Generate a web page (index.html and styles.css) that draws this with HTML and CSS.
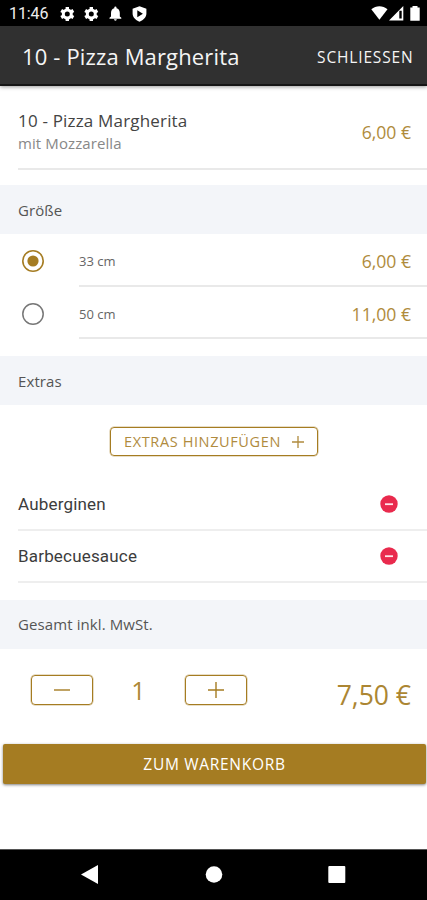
FILE: index.html
```html
<!DOCTYPE html>
<html lang="de">
<head>
<meta charset="utf-8">
<title>10 - Pizza Margherita</title>
<link rel="stylesheet" href="styles.css">
</head>
<body>
<div class="status">
  <span class="time">11:46</span>
  <svg class="status-left" width="94" height="26" viewBox="56 0 94 26" fill="#fff">
    <defs><g id="gear"><circle r="4" fill="none" stroke="#fff" stroke-width="3"/><path d="M0-7V-4M0 7V4M-6.1-3.5L-3.5-2M6.1 3.5L3.5 2M-6.1 3.5L-3.5 2M6.1-3.5L3.5-2" stroke="#fff" stroke-width="3.4"/></g></defs>
    <use href="#gear" x="67.3" y="14"/>
    <use href="#gear" x="91.3" y="14"/>
    <path d="M109.500 18.700v-1l1.500-1.300v-3.400c0-2.600 1.300-4.200 3.300-4.700V7.600a1.100 1.100 0 0 1 2.200 0v.7c2 .5 3.300 2.100 3.300 4.700v3.400l1.500 1.300v1zM114 19.300h2.800a1.400 1.400 0 0 1-2.800 0z"/>
    <path fill-rule="evenodd" d="M139.500 6.200l6.900 2.600v4.800c0 3.600-2.700 6.600-6.900 8.100-4.200-1.500-6.900-4.500-6.900-8.100V8.800zM137.300 10.200v7l5.600-3.500z"/>
  </svg>
  <svg class="status-right" width="52" height="26" viewBox="368 0 52 26" fill="#fff">
    <path d="M371.300 9.300c4.800-4.100 11.400-4.100 16.200 0l-8.100 10.400z"/>
    <path fill-rule="evenodd" d="M403.300 6v14.500H389zM401.700 10.700h-2.400v7.800h2.400z"/>
    <path d="M412.500 6h5v1.500h2.200v13.200h-9.400V7.500h2.200z"/>
  </svg>
</div>
<header class="bar"><h1 class="title">10 - Pizza Margherita</h1><span class="close">SCHLIESSEN</span></header>
<main>
  <div class="product">
    <div><div class="name">10 - Pizza Margherita</div><div class="desc">mit Mozzarella</div></div>
    <span class="price">6,00 €</span>
  </div>
  <h2 class="section">Größe</h2>
  <div class="option">
    <svg width="24" height="24" fill="none" stroke="#a57c22"><circle cx="12" cy="12" r="10.200" stroke-width="1.600"/><circle cx="12" cy="12" r="5.600" fill="#a57c22" stroke="none"/></svg>
    <div class="option-body"><span>33 cm</span><span class="price">6,00 €</span></div>
  </div>
  <div class="option">
    <svg width="24" height="24" fill="none" stroke="#777"><circle cx="12" cy="12" r="10.200" stroke-width="1.500"/></svg>
    <div class="option-body"><span>50 cm</span><span class="price">11,00 €</span></div>
  </div>
  <h2 class="section">Extras</h2>
  <div class="add-area">
    <div class="outline add"><span class="add-text">EXTRAS HINZUFÜGEN</span><svg width="12" height="12" stroke="#b08b3e" stroke-width="1.300"><path d="M0 6H12M6 0V12"/></svg></div>
  </div>
  <div class="extra"><span>Auberginen</span><svg width="18" height="18"><circle cx="9" cy="9" r="8.700" fill="#e92a4d"/><path d="M5 9.200H13" stroke="#ffe5ea" stroke-width="1.800"/></svg></div>
  <div class="extra"><span>Barbecuesauce</span><svg width="18" height="18"><circle cx="9" cy="9" r="8.700" fill="#e92a4d"/><path d="M5 9.200H13" stroke="#ffe5ea" stroke-width="1.800"/></svg></div>
  <h2 class="section total-label">Gesamt inkl. MwSt.</h2>
  <div class="totals">
    <div class="outline step"><svg width="16" height="16" stroke="#a57c22" stroke-width="1.400"><path d="M0 8H16"/></svg></div>
    <span class="count">1</span>
    <div class="outline step"><svg width="16" height="16" stroke="#a57c22" stroke-width="1.400"><path d="M0 8H16M8 0V16"/></svg></div>
    <span class="sum">7,50 €</span>
  </div>
  <div class="cart"><span class="cart-text">ZUM WARENKORB</span></div>
</main>
<nav class="nav">
  <svg width="427" height="50" viewBox="0 850 427 50" fill="#fff"><path d="M81 874.500L98 865v19z"/><circle cx="214" cy="874.500" r="8.300"/><rect x="328.300" y="866" width="17" height="17" rx="1"/></svg>
</nav>
</body>
</html>
```
FILE: styles.css
```css
* { box-sizing: border-box; }
body { margin: 0; width: 427px; height: 900px; display: flex; flex-direction: column; overflow: hidden; background: #fff; font-family: "Open Sans", sans-serif; color: #555; white-space: nowrap; }
svg { display: block; flex: none; }
h1, h2 { margin: 0; font-weight: 400; }
.status { height: 26px; flex: none; background: #000; display: flex; align-items: center; padding: 0 7px 0 9px; }
.time { font: 400 16px/26px Roboto, sans-serif; color: #eee; width: 47px; padding-top: 2px; letter-spacing: -0.1px; }
.status-right { margin-left: auto; }
.bar { height: 60px; flex: none; background: #303030; border-bottom: 2px solid #151515; box-shadow: 0 1px 4px rgba(0,0,0,.4); display: flex; align-items: center; justify-content: space-between; padding: 3px 14px 0 22px; color: #f5f5f5; }
.title { font-size: 22px; letter-spacing: 0.15px; margin-top: -2px; }
.close { font-size: 15.5px; letter-spacing: 0.84px; margin-right: -0.5px; }
main { flex: 1; display: flex; flex-direction: column; }
.product { height: 84px; margin: 0 0 15px 18px; padding: 9px 16px 0 0; border-bottom: 2px solid #e9e9e9; display: flex; align-items: center; justify-content: space-between; }
.name { font-size: 17px; line-height: 23px; color: #444; letter-spacing: 0.18px; }
.desc { font-size: 15px; line-height: 22px; color: #888; letter-spacing: 0.1px; }
.price { font-size: 17.6px; color: #a57c22; font-weight: 400; opacity: .88; }
.section { height: 49px; flex: none; background: #f3f5f9; padding: 0 18px; display: flex; align-items: center; font-size: 15px; color: #555; letter-spacing: 0.1px; }
.total-label { padding-bottom: 2px; }
.option { height: 52px; padding-left: 21px; display: flex; align-items: center; }
.product + .section + .option { height: 53px; }
.option-body { margin-left: 34px; flex: 1; align-self: stretch; border-bottom: 2px solid #e9e9e9; padding: 3px 16px 0 0; display: flex; align-items: center; justify-content: space-between; font-size: 13px; color: #666; }
.option svg { margin-top: 1px; }
.option + .section { margin-top: 17px; }
.add-area { height: 74px; padding-top: 22px; display: flex; justify-content: center; }
.outline { border: 1.5px solid #a57c22; border-radius: 4px; box-shadow: 0 0 0 .5px rgba(165,124,34,.5); display: flex; align-items: center; justify-content: center; }
.add { width: 208px; height: 29px; margin-left: 1px; gap: 11px; color: #b08b3e; font-size: 14.5px; }
.add-text { letter-spacing: 0.62px; }
.extra { height: 52px; margin-left: 18px; padding-right: 29px; border-bottom: 2px solid #eee; display: flex; align-items: center; justify-content: space-between; font-family: Roboto, sans-serif; font-size: 17px; letter-spacing: 0.18px; color: #3c3c3c; }
.extra + .section { margin-top: 17px; }
.totals { height: 95px; padding: 26px 16px 0 30px; display: flex; align-items: flex-start; color: #a57c22; }
.step { width: 62px; height: 30px; margin-left: 1px; }
.count { width: 91px; text-align: center; font-size: 25px; line-height: 30px; font-weight: 400; opacity: .9; }
.sum { margin-left: auto; font-size: 26.5px; line-height: 40px; font-weight: 400; opacity: .92; }
.cart { height: 40px; margin: 0 1px 0 3px; background: #a57c22; border-radius: 2px; box-shadow: 0 1px 3px rgba(0,0,0,.5); color: #fff; display: flex; align-items: center; justify-content: center; font-size: 15.5px; }
.cart-text { letter-spacing: 0.7px; }
.nav { height: 51px; flex: none; background: #000; border-top: 1px solid #555; }
```
